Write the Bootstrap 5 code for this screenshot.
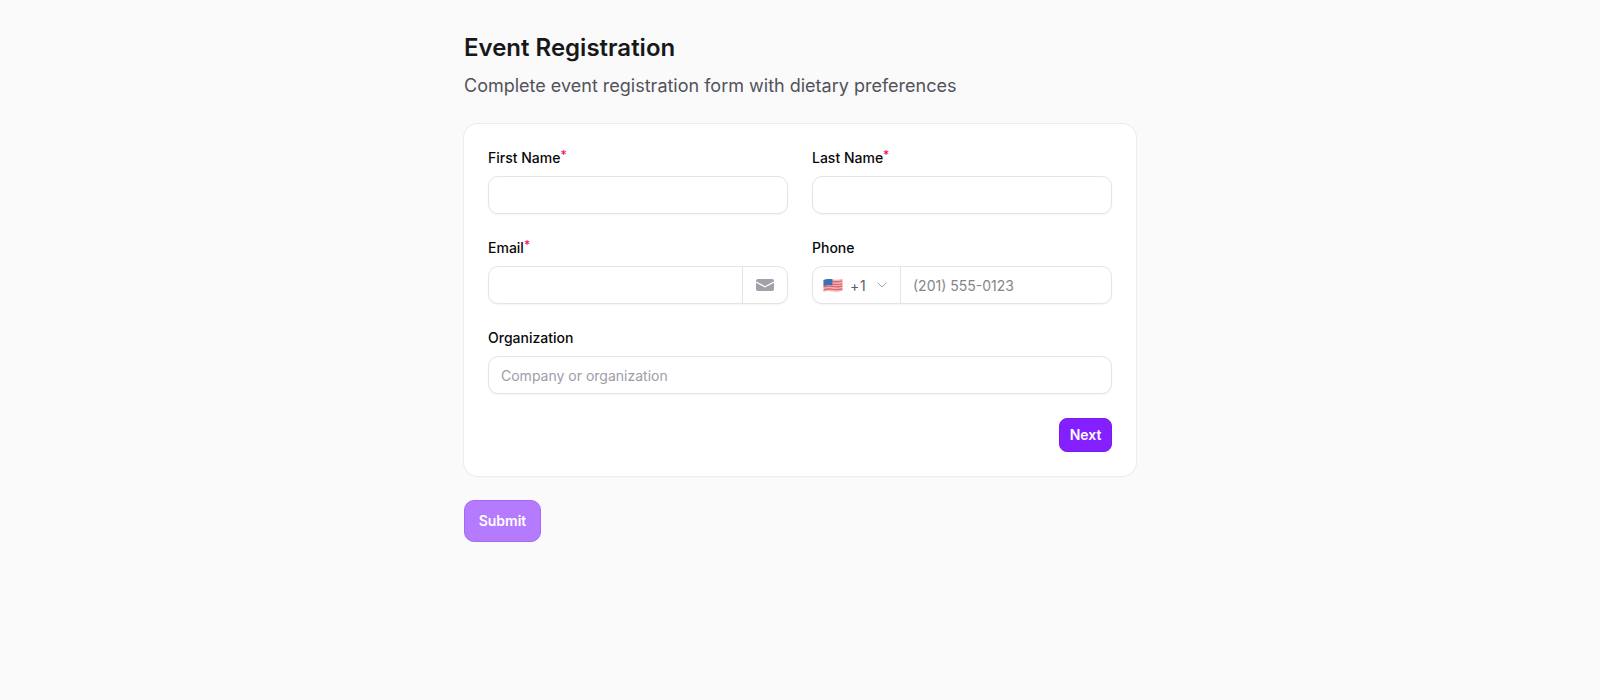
<!DOCTYPE html>
<html lang="en">
<head>
<meta charset="utf-8">
<title>Event Registration</title>
<link href="https://cdn.jsdelivr.net/npm/bootstrap@5.3.0/dist/css/bootstrap.min.css" rel="stylesheet">
<style>
body{background:#fafafa;font-family:Inter,"Liberation Sans",sans-serif;color:#18181b;height:700px;overflow:hidden}
.page-wrap{width:672px;margin:0 auto;padding-top:32px}
.page-title{font-size:24px;line-height:32px;font-weight:600;color:#18181b;margin:0 0 8px}
.page-sub{font-size:18px;line-height:28px;color:#52525b;margin:0 0 24px}
.form-card{background:#fff;border-radius:14px;padding:24px;box-shadow:0 0 0 1px #ececee,0 1px 2px rgba(10,13,18,.04)}
.form-grid{display:grid;grid-template-columns:minmax(0,1fr) minmax(0,1fr);gap:24px}
.span-two{grid-column:1 / span 2}
.field-label{display:block;font-size:14px;line-height:20px;font-weight:500;color:#09090b;margin-bottom:8px}
.req{color:#f31260;font-size:12px;line-height:1;vertical-align:top;position:relative;top:1px}
.field-box{display:flex;height:38px;background:#fff;border:1px solid #e4e4e7;border-radius:10px;box-shadow:0 1px 2px rgba(10,13,18,.05);overflow:hidden}
.field-box input{flex:1;min-width:0;border:0;outline:0;background:transparent;padding:0 12px;font-size:14px;color:#18181b;font-family:inherit}
.field-box input::placeholder{color:#9d9da8;opacity:1}
.field-box input.tel-input::placeholder{color:#85858a}
.addon-end{width:45px;flex:none;border-left:1px solid #e4e4e7;justify-content:center}
.addon-start{width:88px;flex:none;border-right:1px solid #e4e4e7;padding-left:10px;font-size:14px;color:#52525b}
.dial{margin-left:7px;color:#5c5c66;letter-spacing:.8px}
.chev{margin-left:10px}
.btn-next,.btn-submit{color:#fff;font-weight:600;font-size:14px;line-height:20px;padding:0;display:block}
.btn-next{width:53px;height:34px;background:#8420ff;border:1px solid #7a1ce8;border-radius:8px}
.btn-next:hover{background:#8420ff;color:#fff;border-color:#7a1ce8}
.btn-submit{width:77px;height:42px;background:#b57bff;border:1px solid #a868f5;border-radius:10px;margin-top:24px}
.btn-submit:hover{background:#b57bff;color:#fff;border-color:#a868f5}
</style>
</head>
<body>
<main class="page-wrap">
  <h1 class="page-title">Event Registration</h1>
  <p class="page-sub">Complete event registration form with dietary preferences</p>
  <form>
    <div class="form-card">
      <div class="form-grid">
        <div>
          <label class="field-label" for="fn">First Name<span class="req">*</span></label>
          <div class="field-box"><input id="fn" type="text"></div>
        </div>
        <div>
          <label class="field-label" for="ln">Last Name<span class="req">*</span></label>
          <div class="field-box"><input id="ln" type="text"></div>
        </div>
        <div>
          <label class="field-label" for="em">Email<span class="req">*</span></label>
          <div class="field-box">
            <input id="em" type="email">
            <div class="addon-end d-flex align-items-center">
              <svg width="18" height="12" viewBox="0 0 18 12" aria-hidden="true"><rect width="18" height="12" rx="2" fill="#a1a1aa"/><path fill="none" stroke="#fff" stroke-width="1.200" d="M0 3 9 7.800 18 3"/></svg>
            </div>
          </div>
        </div>
        <div>
          <label class="field-label" for="ph">Phone</label>
          <div class="field-box">
            <div class="addon-start d-flex align-items-center">
              <svg width="20" height="15" viewBox="0 0 19 14" aria-hidden="true">
                <path fill="#f3b0b3" d="M.5 1.700C4 .2 7 .8 9.500 1.200c3 .5 6 .4 9-.6v11.400c-3 1-6 1.100-9 .6-2.500-.4-5.500-1-9 .6z"/>
                <path fill="none" stroke="#dc5f66" stroke-width="1" d="M9 3.300c3 .4 6.500.4 9.500-.5M9 5.800c3 .4 6.500.4 9.500-.5M.5 8.500c4-1.300 7-.8 9-.5 3 .5 6 .4 9-.5M.5 11c4-1.300 7-.8 9-.5 3 .5 6 .4 9-.5"/>
                <path fill="#3d6fb6" d="M.5 1.700C3.500.4 6 .6 9 1.100v6c-3-.5-5.500-.7-8.500.6z"/>
              </svg>
              <span class="dial">+1</span>
              <svg class="chev" width="10" height="6" viewBox="0 0 10 6" aria-hidden="true"><path fill="none" stroke="#a1a1aa" stroke-width="1" stroke-linecap="round" stroke-linejoin="round" d="M1 1l4 4 4-4"/></svg>
            </div>
            <input id="ph" class="tel-input" type="tel" placeholder="(201) 555-0123">
          </div>
        </div>
        <div class="span-two">
          <label class="field-label" for="org">Organization</label>
          <div class="field-box"><input id="org" type="text" placeholder="Company or organization"></div>
        </div>
        <div class="span-two d-flex justify-content-end">
          <button type="button" class="btn btn-next">Next</button>
        </div>
      </div>
    </div>
    <button type="button" class="btn btn-submit">Submit</button>
  </form>
</main>
<script src="https://cdn.jsdelivr.net/npm/bootstrap@5.3.0/dist/js/bootstrap.bundle.min.js"></script>
</body>
</html>
